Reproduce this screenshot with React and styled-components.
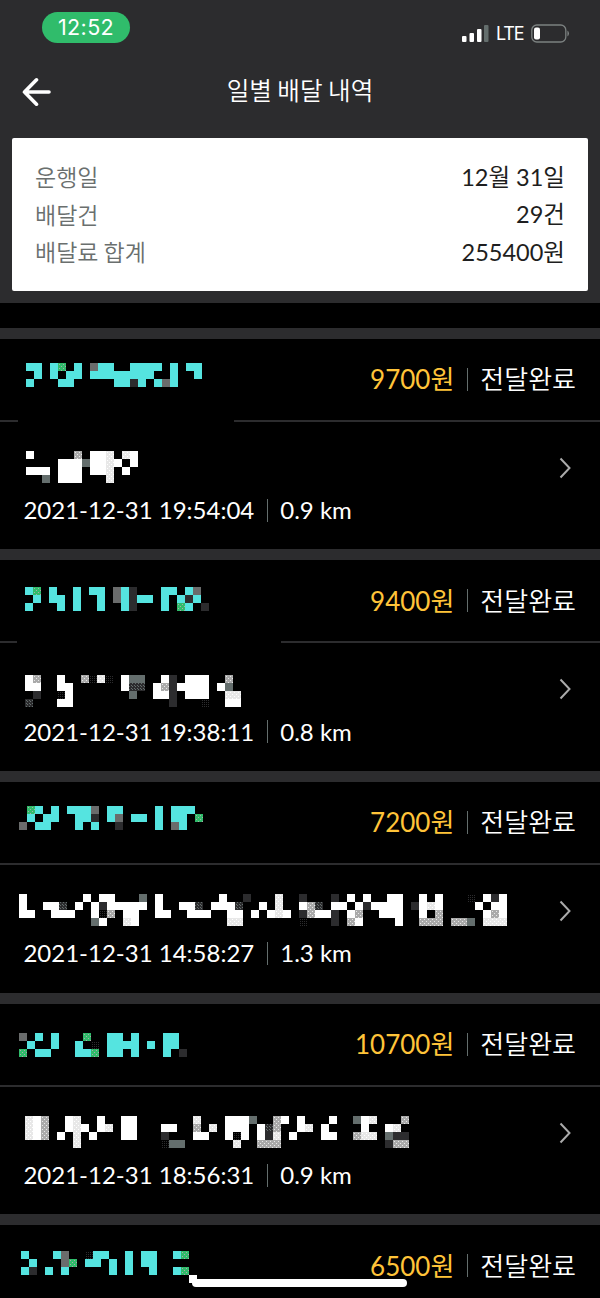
import styled, { createGlobalStyle } from "styled-components";

const CELL = 8;

const cellColors = {
  T: "#55e4e0",
  W: "#ffffff",
  g: "#2c2c2e",
  m: "#646e6d",
  s: "#6a6c6c",
  l: "url(#dotLight)",
  e: "url(#dotPale)",
  n: "url(#dotGreen)",
  p: "url(#dotMid)",
  d: "url(#dotDark)",
};

const deliveries = [
  {
    id: 1,
    price: "9700원",
    date: "2021-12-31 19:54:04",
    distance: "0.9 km",
    gap: [18, 234],
    store: {
      left: 26,
      top: 24.4,
      rows: [
        "TT.Tn.T.sTT..TTTT.T.TT",
        ".T.T.TT.TTTTTTTT..T..T",
        "T...TT.....TTgT.TsT",
      ],
    },
    address: {
      left: 26,
      top: 29.4,
      rows: [
        "W.....l.WWe.eW",
        "....WWWmWWeW.W",
        "WWW.WWW.WWe.W",
        "..m.WWW...e",
      ],
    },
  },
  {
    id: 2,
    price: "9400원",
    date: "2021-12-31 19:38:11",
    distance: "0.8 km",
    gap: [17, 281],
    store: {
      left: 25,
      top: 26.7,
      rows: [
        "Tn.T..T.TT.sTg...TT.Ts",
        ".T.TT.T..T.sTgTT.T.TgT",
        "T...T.T..T..Tg...T.nT.g",
      ],
    },
    address: {
      left: 25,
      top: 31.7,
      rows: [
        "Wl..W..lded.Wmm..Wg.WWW..l",
        "WW..WW......Wpp.WlgWWWW.Wm",
        ".g..dW.......m..WWg.WWW..ee",
        "p...WW............g...d..WW",
      ],
    },
  },
  {
    id: 3,
    price: "7200원",
    date: "2021-12-31 14:58:27",
    distance: "1.3 km",
    gap: [0, 0],
    store: {
      left: 19,
      top: 24,
      rows: [
        ".nT.T.TTTs.TT....T.TTT",
        ".T.TT..TTg.Ts.TT.T.TT.n",
        "s.TT...T.T..g....T.sT",
      ],
    },
    address: {
      left: 19,
      top: 29,
      rows: [
        "W.......W.WW...m.W.......W..g...e..g...g.W.W..WW..W.W...d.WgW",
        "W..WWp.W.WgWWWWW.W..WWp.WWWp..W.e..Wlp.WW.WgWWWW.gWeW....W.WW",
        "WW..WWW..Wdl.WW..WW..WWW..WW.W.WeW.glWWg.Wl..WWW..W.l.....WlW",
        ".........mW..eW...........ee.......d...g.lW....W..lll.llm.eee",
      ],
    },
  },
  {
    id: 4,
    price: "10700원",
    date: "2021-12-31 18:56:31",
    distance: "0.9 km",
    gap: [0, 0],
    store: {
      left: 19,
      top: 29.3,
      rows: [
        "s.T.T...n..TT.T...TT",
        ".T..T..T.d.TTTT.T.TT",
        "n.TT...TTn.TT.T...T.g",
      ],
    },
    address: {
      left: 25,
      top: 29.3,
      rows: [
        "eWl..We..W..WW.......e...WWWm..lW.W...W..mWe...l",
        "eWl..WeW.We.WW...WW..l.e.WWW.Wpl..We.W....W..We",
        "eWl.W.e.W...WW...g...WW..WdW.Wge.W...WW..lee.mgg",
        "......e..........dmm......e..lll.............gll",
      ],
    },
  },
  {
    id: 5,
    price: "6500원",
    gap: [0, 0],
    store: {
      left: 21,
      top: 25.6,
      rows: [
        "T...Ts..dTT..T.TT..Tn",
        ".T...sn.TT.T.T.TT",
        "Tg.T.T.....T.T..T..Tn",
        ".....................W",
      ],
    },
  },
];

function Mosaic({ left, top, rows }) {
  const cols = Math.max(...rows.map((row) => row.length));

  return (
    <MosaicSvg
      $left={left}
      $top={top}
      width={cols * CELL}
      height={rows.length * CELL}
      shapeRendering="crispEdges"
      aria-hidden="true"
    >
      {rows.map((row, y) =>
        row.split("").map((cell, x) =>
          cell === "." ? null : (
            <rect key={`${x}-${y}`} x={x * CELL} y={y * CELL} width={CELL} height={CELL} fill={cellColors[cell]} />
          )
        )
      )}
    </MosaicSvg>
  );
}

function DotPattern({ id, base, dot, size = 4 }) {
  return (
    <pattern id={id} width={size} height={size} patternUnits="userSpaceOnUse">
      <rect width={size} height={size} fill={base} />
      <rect x="1" y="1" width="1" height="1" fill={dot} />
      <rect x={size - 1} y={size - 1} width="1" height="1" fill={dot} />
    </pattern>
  );
}

function Patterns() {
  return (
    <PatternSvg width="0" height="0" aria-hidden="true">
      <defs>
        <DotPattern id="dotLight" base="#aaaaaa" dot="#e8e8e8" />
        <DotPattern id="dotPale" base="#e8e8e8" dot="#ffffff" />
        <DotPattern id="dotGreen" base="#30bc6b" dot="#aaaaaa" />
        <DotPattern id="dotMid" base="#2c2c2e" dot="#646e6d" size={3} />
        <DotPattern id="dotDark" base="#000000" dot="#2c2c2e" size={2} />
      </defs>
    </PatternSvg>
  );
}

function StatusBar() {
  return (
    <StatusRow>
      <Clock>12:52</Clock>
      <StatusIcons>
        <svg width="28" height="18" viewBox="0 0 28 18">
          <rect x="0" y="11" width="4.5" height="6" rx="1" fill="#fff" />
          <rect x="7.5" y="8" width="4.5" height="9" rx="1" fill="#fff" />
          <rect x="15" y="4" width="4.5" height="13" rx="1" fill="#fff" />
          <rect x="22" y="0" width="4.5" height="17" rx="1" fill="#646e6d" />
        </svg>
        <Network>LTE</Network>
        <svg width="39" height="20" viewBox="0 0 39 20">
          <rect x="0.8" y="1" width="34" height="17" rx="5" fill="none" stroke="#7b8180" strokeWidth="1.3" />
          <rect x="3" y="3.5" width="6" height="12" rx="2" fill="#fff" />
          <path d="M36.5 6.5a4 4 0 0 1 0 6z" fill="#8b908f" />
        </svg>
      </StatusIcons>
    </StatusRow>
  );
}

function DeliveryItem({ delivery }) {
  return (
    <Item>
      <ItemHeader>
        <Mosaic {...delivery.store} />
        <ItemStatus>
          <Price>{delivery.price}</Price>
          <Divider />
          <State>전달완료</State>
        </ItemStatus>
      </ItemHeader>
      {delivery.address && (
        <>
          <Rule $from={delivery.gap[0]} $to={delivery.gap[1]} />
          <ItemBody>
            <AddressRow>
              <Mosaic {...delivery.address} />
              <Chevron width="14" height="22" viewBox="0 0 14 22">
                <path d="M1.5 1.5L10.5 11L1.5 20.5" fill="none" stroke="#aaaaaa" strokeWidth="2" />
              </Chevron>
            </AddressRow>
            <Meta>
              <DateText>{delivery.date}</DateText>
              <Divider />
              <Distance>{delivery.distance}</Distance>
            </Meta>
          </ItemBody>
        </>
      )}
    </Item>
  );
}

function App() {
  return (
    <Screen>
      <GlobalStyle />
      <Patterns />
      <Header>
        <StatusBar />
        <NavBar>
          <svg width="30" height="30" viewBox="0 0 30 30">
            <path
              d="M27 15H2.5M14.5 2.8L2.5 15L14.5 27.2"
              fill="none"
              stroke="#fff"
              strokeWidth="3.6"
              strokeLinecap="round"
              strokeLinejoin="round"
            />
          </svg>
          <Title>일별 배달 내역</Title>
        </NavBar>
        <Summary>
          <SummaryRow>
            <SummaryLabel>운행일</SummaryLabel>
            <SummaryValue>12월 31일</SummaryValue>
          </SummaryRow>
          <SummaryRow>
            <SummaryLabel>배달건</SummaryLabel>
            <SummaryValue>29건</SummaryValue>
          </SummaryRow>
          <SummaryRow>
            <SummaryLabel>배달료 합계</SummaryLabel>
            <SummaryValue>255400원</SummaryValue>
          </SummaryRow>
        </Summary>
      </Header>
      <List>
        {deliveries.map((delivery) => (
          <DeliveryItem key={delivery.id} delivery={delivery} />
        ))}
      </List>
      <HomeIndicator />
    </Screen>
  );
}

export default App;

const GlobalStyle = createGlobalStyle`
  * {
    box-sizing: border-box;
  }

  body {
    margin: 0;
    background: #000;
  }

  svg {
    display: block;
    flex-shrink: 0;
  }
`;

const Screen = styled.div`
  position: relative;
  width: 600px;
  height: 1298px;
  overflow: hidden;
  background: #000;
  color: #fff;
  font-family: Lato, "Noto Sans CJK KR", sans-serif;
`;

const PatternSvg = styled.svg`
  position: absolute;
`;

const Header = styled.header`
  height: 303px;
  background: #2c2c2e;
`;

const StatusRow = styled.div`
  height: 64px;
  display: flex;
  justify-content: space-between;
  align-items: flex-start;
  padding: 12px 30px 0 42px;
`;

const Clock = styled.div`
  width: 88px;
  height: 31px;
  border-radius: 16px;
  background: #30bc6b;
  font: 400 21.5px/31px Inter, sans-serif;
  letter-spacing: 0.4px;
  text-align: center;
`;

const StatusIcons = styled.div`
  display: flex;
  align-items: center;
  padding-top: 11px;
`;

const Network = styled.span`
  width: 41px;
  padding-left: 6px;
  font: 400 18px/22px Inter, sans-serif;
  letter-spacing: -1.1px;
`;

const NavBar = styled.div`
  height: 74px;
  display: grid;
  grid-template-columns: 30px 1fr 30px;
  align-items: center;
  padding: 0 22px;

  svg {
    margin-top: -18px;
  }
`;

const Title = styled.h1`
  margin: -24px 0 0;
  font: 350 24.6px/36px "Noto Sans CJK KR", sans-serif;
  text-align: center;
`;

const Summary = styled.section`
  height: 153px;
  margin: 0 12px;
  padding: 20px 23px;
  border-radius: 2px;
  background: #fff;
  font-size: 23px;
  line-height: 37.5px;
`;

const SummaryRow = styled.div`
  display: flex;
  justify-content: space-between;
  height: 37.5px;
`;

const SummaryLabel = styled.span`
  color: #6a6f6e;
  font-family: "Noto Sans CJK KR", sans-serif;
  font-weight: 350;
`;

const SummaryValue = styled.span`
  padding-top: 0.6px;
  color: #1e1e20;
  font-size: 23.5px;
`;

const List = styled.main`
  padding-top: 24.6px;
`;

const Item = styled.article`
  height: 221.7px;
  border-top: 11px solid #2c2c2e;
`;

const ItemHeader = styled.div`
  height: 81px;
  display: flex;
  justify-content: space-between;
  align-items: flex-start;
  padding-right: 24px;
`;

const ItemStatus = styled.div`
  display: flex;
  align-items: center;
  height: 81px;
  font-size: 26px;
  line-height: 36px;
`;

const Price = styled.span`
  color: #ffc439;
`;

const State = styled.span`
  color: #fff;
  font-weight: 350;
`;

const Divider = styled.span`
  width: 1px;
  height: 23px;
  margin: 0 12px 0 13px;
  background: #646e6d;
`;

const Rule = styled.div`
  height: 2px;
  background: linear-gradient(
    to right,
    #2c2c2e ${(props) => props.$from}px,
    transparent ${(props) => props.$from}px ${(props) => props.$to}px,
    #2c2c2e ${(props) => props.$to}px
  );
`;

const ItemBody = styled.div`
  display: flex;
  flex-direction: column;
`;

const AddressRow = styled.div`
  height: 68px;
  display: flex;
  justify-content: space-between;
  align-items: flex-start;
  padding-right: 27px;
`;

const Chevron = styled.svg`
  margin-top: 35px;
`;

const Meta = styled.div`
  display: flex;
  align-items: center;
  height: 41px;
  padding-left: 23.4px;
  font-size: 24px;
  line-height: 36px;
`;

const DateText = styled.time`
  white-space: nowrap;
`;

const Distance = styled.span`
  white-space: nowrap;
`;

const MosaicSvg = styled.svg`
  margin-left: ${(props) => props.$left}px;
  margin-top: ${(props) => props.$top}px;
`;

const HomeIndicator = styled.div`
  position: absolute;
  left: 192px;
  bottom: 11px;
  width: 215px;
  height: 8px;
  border-radius: 4px;
  background: #fff;
`;
